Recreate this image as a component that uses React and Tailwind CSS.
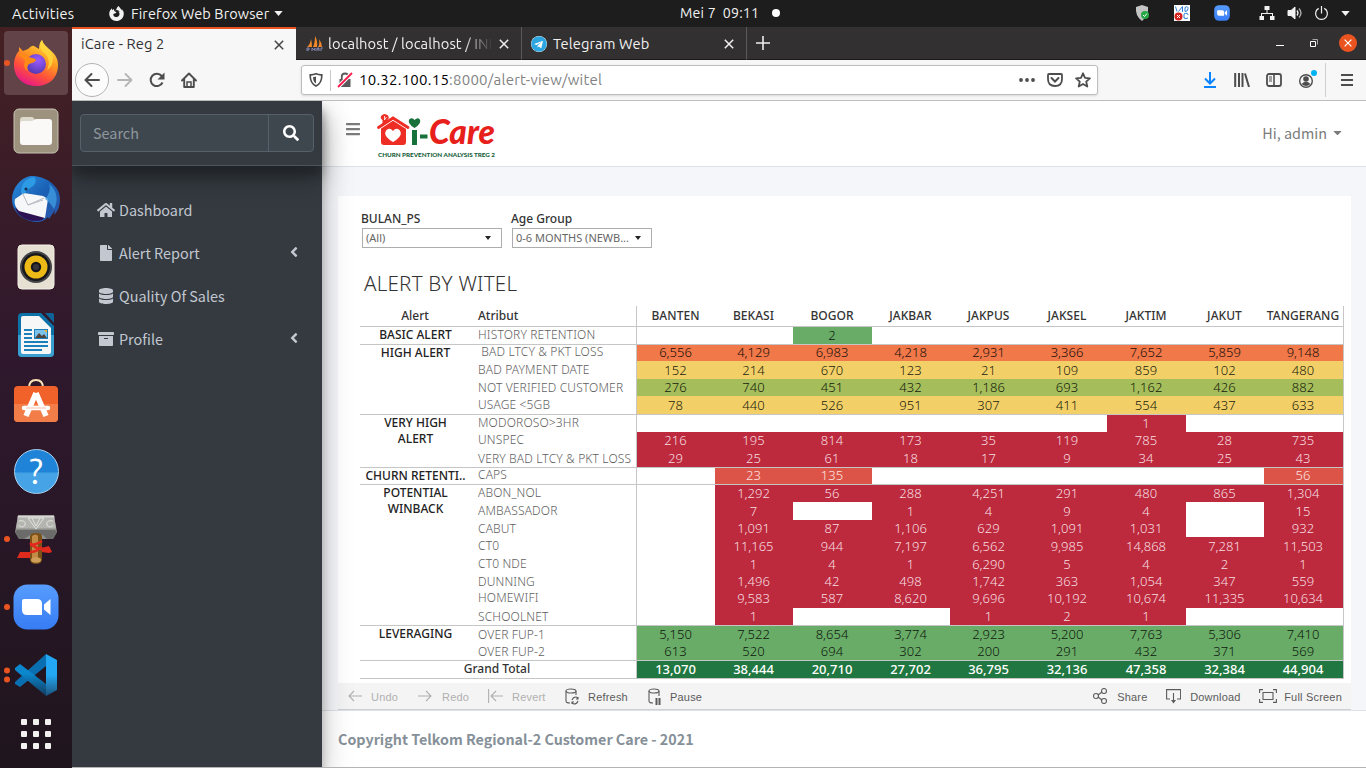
import React from 'react';
import { FaHome, FaFile, FaDatabase, FaArchive, FaAngleLeft, FaBars, FaSearch, FaCaretDown, FaTelegram } from 'react-icons/fa';
import { SiFirefoxbrowser } from 'react-icons/si';

const UI = "font-['Ubuntu','Noto_Sans',sans-serif]";
const SITE = "font-['Source_Sans_Pro','Noto_Sans_CJK_SC',sans-serif]";

const R = 'bg-[#bd2a3d] text-[#f7dfe1]';
const O = 'bg-[#f07849] text-[#20100a]';
const Y = 'bg-[#f3d067] text-[#201c0e]';
const G = 'bg-[#a5be5b] text-[#161a0c]';
const F = 'bg-[#69ac67] text-[#0e170e]';
const C = 'bg-[#dc5447] text-[#fbe5e2]';
const D = 'bg-[#217741] text-white font-medium!';
const COLS = ['BANTEN', 'BEKASI', 'BOGOR', 'JAKBAR', 'JAKPUS', 'JAKSEL', 'JAKTIM', 'JAKUT', 'TANGERANG'];
const GRID = 'grid grid-cols-[78px_78px_79px_78px_78px_79px_79px_78px_79px]';

/* row: name, height, cell tone, values, text raised by a pixel */
const GROUPS = [
  { label: ['BASIC ALERT'], rows: [['HISTORY RETENTION', 'h-[17px]', F, '||2||||||', true]] },
  {
    label: ['HIGH ALERT'],
    rows: [
      ['\u00a0BAD LTCY & PKT LOSS', 'h-[16px]', O, '6,556|4,129|6,983|4,218|2,931|3,366|7,652|5,859|9,148', true],
      ['BAD PAYMENT DATE', 'h-[18px]', Y, '152|214|670|123|21|109|859|102|480'],
      ['NOT VERIFIED CUSTOMER', 'h-[17px]', G, '276|740|451|432|1,186|693|1,162|426|882'],
      ['USAGE <5GB', 'h-[18px]', Y, '78|440|526|951|307|411|554|437|633'],
    ],
  },
  {
    label: ['VERY HIGH', 'ALERT'],
    rows: [
      ['MODOROSO>3HR', 'h-[17px]', R, '||||||1||', true],
      ['UNSPEC', 'h-[18px]', R, '216|195|814|173|35|119|785|28|735', true],
      ['VERY BAD LTCY & PKT LOSS', 'h-[17px]', R, '29|25|61|18|17|9|34|25|43'],
    ],
  },
  { label: ['CHURN RETENTI..'], rows: [['CAPS', 'h-[16px]', C, '|23|135||||||56', true]] },
  {
    label: ['POTENTIAL', 'WINBACK'],
    rows: [
      ['ABON_NOL', 'h-[17px]', R, '|1,292|56|288|4,251|291|480|865|1,304', true],
      ['AMBASSADOR', 'h-[18px]', R, '|7||1|4|9|4||15'],
      ['CABUT', 'h-[17px]', R, '|1,091|87|1,106|629|1,091|1,031||932'],
      ['CT0', 'h-[18px]', R, '|11,165|944|7,197|6,562|9,985|14,868|7,281|11,503'],
      ['CT0 NDE', 'h-[18px]', R, '|1|4|1|6,290|5|4|2|1'],
      ['DUNNING', 'h-[17px]', R, '|1,496|42|498|1,742|363|1,054|347|559'],
      ['HOMEWIFI', 'h-[18px]', R, '|9,583|587|8,620|9,696|10,192|10,674|11,335|10,634', true],
      ['SCHOOLNET', 'h-[17px]', R, '|1|||1|2|1||'],
    ],
  },
  {
    label: ['LEVERAGING'],
    rows: [
      ['OVER FUP-1', 'h-[17px]', F, '5,150|7,522|8,654|3,774|2,923|5,200|7,763|5,306|7,410'],
      ['OVER FUP-2', 'h-[17px]', F, '613|520|694|302|200|291|432|371|569'],
    ],
  },
];

function Cells({ values, tone, height, raised }) {
  return (
    <div className={`${GRID} ${height} border-x border-[#c6c6c6]`}>
      {values.split('|').map((v, i) => (
        <div key={i} className={`flex items-center justify-center pr-[1px] text-[13px] leading-none font-light ${raised ? 'pb-px' : ''} ${v ? tone : ''}`}>{v}</div>
      ))}
    </div>
  );
}

function AlertTable() {
  return (
    <div className="w-[984px] font-['Noto_Sans',sans-serif] text-[12.5px] text-[#333]">
      <div className="flex h-[21px] border-b border-[#c6c6c6] text-[12px] font-medium">
        <div className="flex w-[110px] items-center justify-center">Alert</div>
        <div className="flex w-[166px] items-center pl-[8px]">Atribut</div>
        <div className={`${GRID} border-x border-[#c6c6c6]`}>
          {COLS.map((c) => (
            <div key={c} className="flex items-center justify-center pr-px tracking-[0.05px]">{c}</div>
          ))}
        </div>
      </div>
      {GROUPS.map((g) => (
        <div key={g.label[0]} className="flex border-b border-[#c6c6c6]">
          <div className="w-[111px] text-center text-[12px] leading-[16px] font-medium whitespace-nowrap text-[#222]">
            {g.label.map((l) => (
              <div key={l}>{l}</div>
            ))}
          </div>
          <div>
            {g.rows.map(([name, height, tone, values, raised]) => (
              <div key={name} className="flex">
                <div className={`flex w-[165px] items-center pl-[7px] text-[12px] leading-none font-light tracking-[0.15px] whitespace-nowrap text-[#5e5e5e] ${raised ? 'pb-[2px]' : ''} ${height}`}>{name}</div>
                <Cells values={values} tone={tone} height={height} raised={raised} />
              </div>
            ))}
          </div>
        </div>
      ))}
      <div className="flex border-b border-[#c6c6c6]">
        <div className="flex w-[276px] items-center justify-center pr-[2px] pb-[2px] text-[12px] leading-none font-medium">Grand Total</div>
        <Cells values="13,070|38,444|20,710|27,702|36,795|32,136|47,358|32,384|44,904" tone={D} height="h-[17px]" />
      </div>
    </div>
  );
}

/* ---------- dock icons ---------- */
const FirefoxIcon = () => (
  <svg viewBox="0 0 48 48" className="size-12">
    <defs>
      <linearGradient id="ffa" x1=".8" y1="0" x2=".3" y2="1">
        <stop offset="0" stopColor="#fff04a" />
        <stop offset=".4" stopColor="#ff9a20" />
        <stop offset=".7" stopColor="#ff4f3c" />
        <stop offset="1" stopColor="#e5168c" />
      </linearGradient>
      <radialGradient id="ffb" cx=".6" cy=".3" r=".8">
        <stop offset="0" stopColor="#9d5bff" />
        <stop offset="1" stopColor="#4b35a8" />
      </radialGradient>
    </defs>
    <path d="M30 1c1 4 4 6 8 10 6 5 8 9 8 15 0 13-9 21-22 21S2 38 2 26C2 20 4 15 7 12V8l4 4 5-2c2-1 3-4 6-3l5 3c0-4 1-7 3-9z" fill="url(#ffa)" />
    <circle cx="24" cy="25" r="10" fill="url(#ffb)" />
    <path d="M6 16c4-2 7-1 10 2 4 1 7 1 8 3-1 3-5 3-7 4-2 2-2 4-1 7-5-2-4-7-3-10-1-3-4-4-7-6z" fill="#ff8a16" />
    <path d="M30 12c6 4 9 11 5 19 8-5 7-15 3-20-4-3-7-6-8-10-3 4-2 7 0 11z" fill="#ffd83d" opacity=".8" />
  </svg>
);
const FilesIcon = () => (
  <svg viewBox="0 0 46 46" className="size-[46px]">
    <rect x="1" y="1" width="44" height="44" rx="5" fill="#9c927e" stroke="#c9c2b4" />
    <path d="M7 12q0-3 3-3h9q2 0 3 3h14q3 0 3 3v4H7z" fill="#ded9cd" />
    <path d="M7 16q0-3 3-3h9l4-2h13q3 0 3 3v20q0 3-3 3H10q-3 0-3-3z" fill="#faf9f7" />
  </svg>
);
const ThunderbirdIcon = () => (
  <svg viewBox="0 0 48 48" className="size-12">
    <defs>
      <linearGradient id="tb" x1="0" y1="0" x2="1" y2="1">
        <stop offset="0" stopColor="#2b8fe0" />
        <stop offset=".5" stopColor="#1a60b5" />
        <stop offset="1" stopColor="#2a55a8" />
      </linearGradient>
    </defs>
    <path d="M18 1c14-1 30 9 30 23 0 7-2 12-6 16l1-5-6 9-1-2c-4 4-7 5-12 5C12 46 0 38 0 24 0 14 8 3 18 1z" fill="url(#tb)" />
    <path d="M3 33l8 3 22 6-3 3C18 48 7 43 3 33z" fill="#2c1153" />
    <path d="M3 24l9-6 19 3 5 3-3 19-26-7c-4-4-5-8-4-12z" fill="#f6f7f9" />
    <path d="M10 17l6 13 16-7M16 30l15-5" fill="none" stroke="#b7bac2" strokeWidth="1" />
    <path d="M9 17C9 8 15 3 22 2c3 3 2 6-1 9l-6 4-3 4z" fill="#2c9ae4" />
    <circle cx="14" cy="14" r="1.5" fill="#132c4f" />
    <path d="M33 24c4-4 6-10 4-15 8 6 10 16 5 25-2-3-4-7-9-10z" fill="#3f9be0" opacity=".8" />
  </svg>
);
const RhythmboxIcon = () => (
  <svg viewBox="0 0 38 46" className="h-[46px] w-[38px]">
    <rect x="1" y="1" width="36" height="44" rx="4" fill="#e6e0d3" stroke="#f4f0e6" />
    <circle cx="19" cy="23" r="16" fill="#45454a" />
    <circle cx="19" cy="23" r="14" fill="#17171c" />
    <circle cx="19" cy="23" r="11.5" fill="#edb917" />
    <circle cx="19" cy="23" r="5.2" fill="#16161a" />
    <circle cx="19" cy="23" r="3" fill="#34343a" />
  </svg>
);
const WriterIcon = () => (
  <svg viewBox="0 0 38 46" className="h-[46px] w-[38px]">
    <path d="M5 1h19l13 13v27q0 4-4 4H5q-4 0-4-4V5q0-4 4-4z" fill="#0d72a8" />
    <path d="M1 23h36v18q0 4-4 4H5q-4 0-4-4z" fill="#3a9ed0" />
    <path d="M28 1h7q2 0 2 2v8z" fill="#0e6498" />
    <path d="M6 4h16l12 12v24q0 2-2 2H6q-2 0-2-2V6q0-2 2-2z" fill="#f7f7f7" />
    <path d="M7 18h8M7 22h8M7 26h8M7 30h24M7 34h24M7 38h18" stroke="#1c81ba" strokeWidth="2" />
    <rect x="17" y="17" width="14" height="10" fill="#1c81ba" />
    <rect x="18" y="18" width="12" height="8" fill="#7dc2ea" />
    <path d="M18 26l4-5 3 3 2-2 3 4z" fill="#4f4540" />
    <path d="M27 18h3v3z" fill="#f5b32d" />
  </svg>
);
const SoftwareIcon = () => (
  <svg viewBox="0 0 46 46" className="mb-1 size-[46px]">
    <path d="M16 10q0-8 7-8t7 8" fill="none" stroke="#fae2b4" strokeWidth="2" />
    <rect x="1" y="8" width="44" height="36" rx="4" fill="#f1622b" />
    <path d="M1 26h44v14q0 4-4 4H5q-4 0-4-4z" fill="#f37d48" />
    <path d="M23 15L13 38M23 15l10 23" stroke="#fff" strokeWidth="5.5" />
    <path d="M11 30h24" stroke="#fff" strokeWidth="4.5" strokeLinecap="round" />
    <path d="M13 30h20" stroke="#f6b398" strokeWidth=".8" />
  </svg>
);
const HelpIcon = () => (
  <span className={`relative flex size-[45px] items-center justify-center rounded-full border border-[#a8d3f3] bg-linear-to-b from-[#1f84d8] from-50% to-[#45a3e6] to-55% text-[35px] leading-none text-white ${UI}`}>?</span>
);
const HammerIcon = () => (
  <svg viewBox="0 0 44 50" className="h-[50px] w-11">
    <path d="M4 2h36l3 16-4 7H5l-4-7z" fill="#8f8f8c" />
    <path d="M4 1.500h36l2 13H2z" fill="#b4b4b0" />
    <path d="M4 1.500h36l.5 2h-37z" fill="#d6d6d2" />
    <path d="M1 18l2-2h38l2 2-4 7h-6l-4-4H16l-6 4H5z" fill="#6b6b69" />
    <path d="M5 7c5-1 7 1 6 4s-6 2-6 0M39 7c-5-1-7 1-6 4s6 2 6 0M14 4h16l-8 11zM18 4l4 8 4-8" fill="none" stroke="#e6e6e3" strokeWidth=".9" />
    <path d="M3 44l3-6h11l-1 6zM27 34l8-2 1 2 2 4-3 1-8-1z" fill="#df2a1e" />
    <path d="M16 23q0-4 6-4t6 4v23q-1 4-6 4t-6-4z" fill="#7b5117" />
    <path d="M18 22q4-3 6 0v22h-6z" fill="#c08c45" />
    <path d="M16 31q6 0 12-4M16 29q6 6 12 6M16 38q6 0 12-5" fill="none" stroke="#e0281c" strokeWidth="2.500" />
    <ellipse cx="22" cy="46" rx="5" ry="2.800" fill="#cf9f59" />
  </svg>
);
const ZoomIcon = ({ className }) => (
  <svg viewBox="0 0 46 46" className={className}>
    <defs>
      <linearGradient id="zm" x1="0" y1="0" x2="0" y2="1">
        <stop offset="0" stopColor="#579dfd" />
        <stop offset="1" stopColor="#377cf4" />
      </linearGradient>
    </defs>
    <rect x=".5" y=".5" width="45" height="45" rx="14" fill="url(#zm)" />
    <path d="M9 17q0-2 2-2h13q5 0 5 5v11H14q-5 0-5-5zM37.500 15v16l-6.500-5.500v-5z" fill="#fff" />
  </svg>
);
const CodeIcon = () => (
  <svg viewBox="0 0 44 44" className="size-11">
    <defs>
      <linearGradient id="vsa" x1="0" y1="0" x2="0" y2="1">
        <stop offset=".5" stopColor="#23a7f2" />
        <stop offset="1" stopColor="#1c527c" />
      </linearGradient>
      <linearGradient id="vsb" x1="0" y1="0" x2="0" y2="1">
        <stop offset=".3" stopColor="#0b87ce" />
        <stop offset="1" stopColor="#123a5c" />
      </linearGradient>
    </defs>
    <path d="M1 29L32 1v12L6 34l-5-3z" fill="#0a6fb0" />
    <path d="M1 15l5-4 26 20v12L1 17z" fill="url(#vsb)" />
    <path d="M32 1l11 6v30l-11 6z" fill="url(#vsa)" />
  </svg>
);

function DockItem({ children, dots = 0, active }) {
  return (
    <div className={`relative mx-1 flex h-16 shrink-0 items-center justify-center rounded ${active ? 'bg-[#624448]' : ''}`}>
      {dots > 0 && (
        <span className="absolute top-1/2 left-0 flex -translate-y-1/2 flex-col gap-[3px]">
          {Array.from({ length: dots }, (_, i) => (
            <i key={i} className="block size-[6px] rounded-full bg-[#e95420]" />
          ))}
        </span>
      )}
      {children}
    </div>
  );
}

function Dock() {
  return (
    <nav className="flex w-[72px] shrink-0 flex-col gap-1 overflow-hidden bg-linear-to-b from-[#452023] via-[#2f182d] via-45% to-[#1f151d] pt-1">
      <DockItem active dots={1}><FirefoxIcon /></DockItem>
      <DockItem><FilesIcon /></DockItem>
      <DockItem><ThunderbirdIcon /></DockItem>
      <DockItem><RhythmboxIcon /></DockItem>
      <DockItem><WriterIcon /></DockItem>
      <DockItem><SoftwareIcon /></DockItem>
      <DockItem><HelpIcon /></DockItem>
      <DockItem dots={1}><HammerIcon /></DockItem>
      <DockItem dots={1}><ZoomIcon className="size-[46px]" /></DockItem>
      <DockItem dots={2}><CodeIcon /></DockItem>
      <div className="ml-[21px] grid w-[30px] grid-cols-3 gap-[6px] pt-[8px]">
        {Array.from({ length: 9 }, (_, i) => (
          <i key={i} className="size-[6px] rounded-[1px] bg-[#f2f1f0]" />
        ))}
      </div>
    </nav>
  );
}

function TopBar() {
  return (
    <header className={`grid h-[27px] shrink-0 grid-cols-[680px_1fr] items-center bg-[#1d1d1d] text-[14.500px] text-[#f2f2f2] ${UI}`}>
      <div className="flex items-center">
        <span className="ml-3 w-[63px] tracking-[0.3px]">Activities</span>
        <SiFirefoxbrowser className="ml-[34px] size-[15px]" />
        <span className="ml-[7px] w-[138px] tracking-[0.1px] whitespace-nowrap">Firefox Web Browser</span>
        <svg viewBox="0 0 10 6" className="ml-[5px] h-[5px] w-[9px]"><path d="M0 0h10L5 6z" fill="currentColor" /></svg>
      </div>
      <div className="flex items-center">
        <span className="w-[79px] text-[14.200px] tracking-[0.2px] whitespace-pre">Mei 7  09:11</span>
        <i className="ml-[13px] size-2 rounded-full bg-white" />
        <span className="flex-1" />
        <svg viewBox="0 0 16 16" className="size-4">
          <path d="M1 2l6-2 6 2q1 8-6 14-7-5-6-14z" fill="#c4c4c4" />
          <circle cx="10" cy="10" r="4" fill="#26a845" />
          <path d="M8 10l1.500 1.500 2.500-3" fill="none" stroke="#fff" />
        </svg>
        <svg viewBox="0 0 16 16" className="ml-[23px] size-4">
          <path d="M0 0h16v16H0z" fill="#fff" />
          <path d="M1.500 1.500l1.500 5M4.500 6.500l4-5v5.500M11 2.500q3-2 3 1t-3 3V2.500M10 9q4-2 4 1M10 9v4q2 1 4 0" fill="none" stroke="#2d7fd6" />
          <circle cx="4.500" cy="11.500" r="4" fill="#d4211d" />
          <path d="M3 10l3 3m0-3l-3 3" stroke="#fff" />
        </svg>
        <ZoomIcon className="ml-6 size-4" />
        <svg viewBox="0 0 16 14" className="ml-[29px] h-[14px] w-4" fill="#f2f2f2">
          <path d="M5.500 0h5v4H8.500v3H14v3h1.500v4h-4.500v-4h2V8H3v2h2v4H.5v-4H2V7h5.500V4h-2z" />
        </svg>
        <svg viewBox="0 0 16 16" className="ml-3 size-4" fill="none" stroke="#f2f2f2">
          <path d="M1 5.500h3l4-3.500v12L4 10.500H1z" fill="#f2f2f2" />
          <path d="M10 5.500q2 2.500 0 5" strokeWidth="1.300" />
          <path d="M12 3.500q4 4.500 0 9" strokeWidth="1.300" opacity=".7" />
        </svg>
        <svg viewBox="0 0 16 16" className="ml-[11px] size-[15px]" fill="none" stroke="#f2f2f2" strokeWidth="1.300">
          <path d="M5 2.500a6.300 6.300 0 1 0 6 0M8 0v8" />
        </svg>
        <svg viewBox="0 0 10 6" className="mr-[16px] ml-[12px] h-[5px] w-[9px]"><path d="M0 0h10L5 6z" fill="#f2f2f2" /></svg>
      </div>
    </header>
  );
}

const Cross = ({ className }) => (
  <svg viewBox="0 0 10 10" className={className}><path d="M.8.8l8.400 8.400M9.200.8L.8 9.200" stroke="currentColor" strokeWidth="1.500" fill="none" /></svg>
);

function Tabs() {
  return (
    <div className={`flex h-[33px] shrink-0 bg-[#333031] text-[14.700px] text-[#f0f0f0] ${UI}`}>
      <div className="flex w-[224px] items-center border-t-2 border-[#e95420] bg-[#f7f7f7] pr-[12px] pl-[9px] text-[#333]">
        <span className="flex-1 tracking-[0.1px]">iCare - Reg 2</span>
        <Cross className="size-[10px] text-[#444]" />
      </div>
      <div className="flex w-[226px] items-center border-r border-b border-r-[#5c5a5a] border-b-[#1c1b1b] pt-[2px] pr-[12px] pl-[10px]">
        <svg viewBox="0 0 17 16" className="h-4 w-[17px]">
          <path d="M1 11Q4 9 5 3q1 4 1 8zM7 11Q9 7 9 0q3 5 2 11zM12 11q2-3 1-8 3 4 3 8z" fill="#f0872a" />
          <path d="M1 15v-3h2v2H1m5 1v-3l2 2 1-2v3m2 0v-3h2v3m-2-2h2m2 2v-3l2 0" fill="none" stroke="#8b8fc2" strokeWidth=".9" />
        </svg>
        <span className="ml-[5px] w-[166px] tracking-[0.1px] whitespace-nowrap [mask-image:linear-gradient(90deg,#000_82%,transparent_99%)]">localhost / localhost / INI</span>
        <Cross className="ml-[5px] size-[10px] shrink-0" />
      </div>
      <div className="flex w-[225px] items-center border-r border-b border-r-[#5c5a5a] border-b-[#1c1b1b] pt-[2px] pr-[12px] pl-[9px]">
        <FaTelegram className="size-4 rounded-full bg-white text-[#2ca5e0]" />
        <span className="ml-[6px] flex-1 tracking-[0.1px]">Telegram Web</span>
        <Cross className="size-[10px]" />
      </div>
      <div className="flex flex-1 items-center border-b border-[#1c1b1b] pr-[9px] pl-[9px]">
        <svg viewBox="0 0 14 14" className="size-[14px]"><path d="M7 0v14M0 7h14" stroke="#eee" strokeWidth="1.600" /></svg>
        <span className="flex-1" />
        <i className="mt-[5px] h-px w-2 bg-white" />
        <svg viewBox="0 0 8 8" className="ml-[26px] size-2"><path d="M.5 2.500h5v5h-5z" fill="none" stroke="#fff" /><path d="M2.500.5h5v5" fill="none" stroke="#aaa" /></svg>
        <span className="ml-[21px] flex size-[18px] items-center justify-center rounded-full bg-[#e95420] text-white"><Cross className="size-[8px]" /></span>
      </div>
    </div>
  );
}

function Toolbar() {
  return (
    <div className={`flex h-[41px] shrink-0 items-center border-b border-[#bdbdbd] bg-[#f7f7f7] pl-[3px] text-[#4d4d4d] ${UI}`}>
      <span className="flex size-[34px] items-center justify-center rounded-full border border-[#b3b3b3] bg-[#fcfcfc]">
        <svg viewBox="0 0 16 16" className="size-4"><path d="M15 8H2M7.500 2L1.500 8l6 6" fill="none" stroke="currentColor" strokeWidth="2" strokeLinecap="round" strokeLinejoin="round" /></svg>
      </span>
      <svg viewBox="0 0 16 16" className="ml-2 size-4 text-[#b5b5b5]"><path d="M1 8h13M8.500 2l6 6-6 6" fill="none" stroke="currentColor" strokeWidth="1.800" strokeLinecap="round" strokeLinejoin="round" /></svg>
      <svg viewBox="0 0 16 16" className="ml-4 size-4"><path d="M13.500 10.500A6.200 6.200 0 1 1 12.700 4L14 5.500" fill="none" stroke="currentColor" strokeWidth="2" /><path d="M15.500.5v7h-7z" fill="currentColor" /></svg>
      <svg viewBox="0 0 16 16" className="ml-4 size-4"><path d="M1 8.500L8 1.500l7 7M3.200 7.500V15h9.600V7.500" fill="none" stroke="currentColor" strokeWidth="1.900" strokeLinecap="round" strokeLinejoin="round" /><path d="M6 15v-5h4v5" fill="none" stroke="currentColor" strokeWidth="1.500" /></svg>
      <div className="ml-[104px] flex h-[30px] w-[797px] items-center rounded-[3px] border border-[#bdbdbd] bg-white pr-[6px] pl-[7px] shadow-sm">
        <svg viewBox="0 0 14 14" className="size-[14px]"><path d="M1.200 1.800Q4 2 7 .8q3 1.200 5.800 1 .3 8.500-5.800 11.300Q.9 10.300 1.200 1.800z" fill="none" stroke="currentColor" strokeWidth="1.600" /><path d="M7 3.500v7Q4 8.500 4 4.200z" fill="currentColor" /></svg>
        <i className="ml-[7px] h-[21px] w-px bg-[#c8c8c8]" />
        <svg viewBox="0 0 16 16" className="ml-[6px] size-4"><path d="M2.500 7h11v8h-11z" fill="#5a5a5a" /><path d="M4.800 7.500V4.500q0-3 3.200-3t3.200 3v3" fill="none" stroke="#5a5a5a" strokeWidth="1.800" /><path d="M1 15L15 1" stroke="#fff" strokeWidth="4" /><path d="M1 15L15 1" stroke="#ff1a4b" strokeWidth="1.800" /></svg>
        <span className="ml-[6px] flex-1 pt-px text-[15px] tracking-[0.240px] text-[#828282]"><span className="text-black">10.32.100.15</span>:8000/alert-view/witel</span>
        <svg viewBox="0 0 16 4" className="h-1 w-4" fill="currentColor"><circle cx="2" cy="2" r="1.900" /><circle cx="8" cy="2" r="1.900" /><circle cx="14" cy="2" r="1.900" /></svg>
        <svg viewBox="0 0 16 14" className="ml-[12px] h-[14px] w-4"><path d="M2 1h12q1 0 1 1v4q0 7-7 7T1 6V2q0-1 1-1z" fill="none" stroke="currentColor" strokeWidth="1.800" /><path d="M4.500 5L8 8.500 11.500 5" fill="none" stroke="currentColor" strokeWidth="2" strokeLinecap="round" /></svg>
        <svg viewBox="0 0 16 16" className="ml-[12px] size-4"><path d="M8 1.300l2 4.500 4.900.5-3.700 3.300 1.100 4.900L8 12l-4.300 2.500 1.100-4.900L1.100 6.300 6 5.800z" fill="none" stroke="currentColor" strokeWidth="1.800" strokeLinejoin="round" /></svg>
      </div>
      <svg viewBox="0 0 14 16" className="ml-[105px] h-4 w-[14px]"><path d="M7 0v11M2 6.500l5 5 5-5M1 15h12" fill="none" stroke="#0a84ff" strokeWidth="2" /></svg>
      <svg viewBox="0 0 16 14" className="ml-[17px] h-[14px] w-4"><path d="M1.200 0v14M5 0v14M8.500 0v14M11 .5L15 14" fill="none" stroke="currentColor" strokeWidth="2" /></svg>
      <svg viewBox="0 0 16 14" className="ml-4 h-[14px] w-4"><rect x="1" y="1" width="14" height="12" rx="2" fill="none" stroke="currentColor" strokeWidth="1.800" /><path d="M8 1v12" stroke="currentColor" strokeWidth="1.600" /><path d="M3 4h3M3 6h3M3 8h3" stroke="currentColor" /></svg>
      <svg viewBox="0 0 20 18" className="mb-[2px] ml-4 h-[18px] w-5"><circle cx="8" cy="11" r="6.300" fill="none" stroke="currentColor" strokeWidth="1.400" /><circle cx="8" cy="9" r="2.800" fill="currentColor" /><path d="M3.500 14q4.500-4.500 9 0-4.500 4-9 0z" fill="currentColor" /><circle cx="16" cy="3" r="3" fill="#00b3f4" /></svg>
      <i className="ml-[7px] h-[34px] w-px bg-[#cfcfcf]" />
      <svg viewBox="0 0 12 12" className="ml-[15px] size-3"><path d="M0 1h12M0 6h12M0 11h12" stroke="currentColor" strokeWidth="2" /></svg>
    </div>
  );
}

const ELEV = 'shadow-[0_14px_28px_rgba(0,0,0,0.25),0_10px_10px_rgba(0,0,0,0.22)]';

function NavItem({ icon: Icon, label, more, big }) {
  return (
    <div className="flex h-[43px] items-center pr-[20px] pl-[25px]">
      <span className="flex w-[18px] justify-center"><Icon className={big ? 'size-[18px]' : 'size-4'} /></span>
      <span className="ml-1 flex-1">{label}</span>
      {more && <FaAngleLeft className="mb-px size-4" />}
    </div>
  );
}

function Sidebar() {
  return (
    <aside className={`relative z-10 w-[250px] shrink-0 bg-[#343a40] text-[14.400px] text-[#c2c7d0] ${SITE} ${ELEV}`}>
      <div className={`h-[65px] border-b border-[#4b545c] bg-[#343a40] px-2 pt-[13px] ${ELEV}`}>
        <div className="flex h-[38px] rounded-[4px] border border-[#56606a] bg-[#3f474e]">
          <span className="flex flex-1 items-center pl-3 text-[#8f979e]">Search</span>
          <span className="flex w-[45px] items-center justify-center border-l border-[#56606a] text-white"><FaSearch className="size-4" /></span>
        </div>
      </div>
      <div className="pt-[22px]">
        <NavItem icon={FaHome} label="Dashboard" big />
        <NavItem icon={FaFile} label="Alert Report" more />
        <NavItem icon={FaDatabase} label="Quality Of Sales" />
        <NavItem icon={FaArchive} label="Profile" more />
      </div>
    </aside>
  );
}

const Logo = () => (
  <svg viewBox="0 0 120 46" className="h-[46px] w-[120px] overflow-visible">
    <path d="M4 13L16 6l13 7v16q0 3-3 3H7q-3 0-3-3z" fill="#ee2d24" />
    <path d="M1.500 16.500L16 7l15 9.500" fill="none" stroke="#fff" strokeWidth="1.200" />
    <path d="M1.500 14.500L16 5l15 9.500" fill="none" stroke="#ee2d24" strokeWidth="2.800" strokeLinecap="round" />
    <path d="M5.500 11V7Q2.500 5 4.500 2.500q3-3 6.500 0 2 3-1 4.500v2" fill="#ee2d24" />
    <path d="M7.500 3v4l2-3" fill="none" stroke="#fff" strokeWidth=".8" />
    <path d="M16 29q-11-6.500-6.500-12 3.500-3 6.500 1 3-4 6.500-1 4.500 5.500-6.500 12z" fill="#fff" />
    <path d="M37.500 15q-8-5-5-9 3-2 5 1 3-3 5-1 3 4-5 9z" fill="#16713b" />
    <path d="M35 17h5v15h-5zM43 21.500h7.500v4H43z" fill="#16713b" />
    <text x="52" y="31" fill="#e8201c" fontFamily="Lato" fontWeight="900" fontStyle="italic" fontSize="34" textLength="66" lengthAdjust="spacingAndGlyphs">Care</text>
    <text x="1" y="43.500" fill="#16603a" fontFamily="Lato" fontWeight="900" fontSize="5.800" textLength="117" lengthAdjust="spacingAndGlyphs">CHURN PREVENTION ANALYSIS TREG 2</text>
  </svg>
);

function Select({ label, value, className }) {
  return (
    <div className={className}>
      <div className="h-[16px] font-['Noto_Sans',sans-serif] text-[12px] leading-[16px] font-medium text-[#333]">{label}</div>
      <div className="mt-[1px] ml-px flex h-5 w-[140px] items-center border border-[#adadad] pr-[10px] pl-[3px] font-['Noto_Sans',sans-serif] text-[11px] text-[#666]">
        <span className="flex-1 pt-px whitespace-nowrap">{value}</span>
        <svg viewBox="0 0 6 4" className="h-1 w-[6px]"><path d="M0 0h6L3 4z" fill="#222" /></svg>
      </div>
    </div>
  );
}

function Viz() {
  const ic = { fill: 'none', stroke: 'currentColor', strokeWidth: 1.1 };
  return (
    <>
      <div className="h-[487px] bg-white pt-[15px] pl-[22px]">
        <div className="flex">
          <Select label="BULAN_PS" value="(All)" className="w-[150px] pl-px" />
          <Select label="Age Group" value="0-6 MONTHS (NEWB..." className="pl-px" />
        </div>
        <h1 className="mt-[20px] h-[30px] pl-[4px] font-['Noto_Sans',sans-serif] text-[20.500px] leading-[30px] font-light tracking-[0.25px] text-[#333]">ALERT BY WITEL</h1>
        <div className="pt-[8px]"><AlertTable /></div>
      </div>
      <div className="flex h-[27px] items-center border-b border-[#cfcfd6] bg-[#f4f4f4] pr-[9px] pl-[10px] font-['Liberation_Sans',Arial,sans-serif] text-[11px] tracking-[0.2px] text-[#5b5b5b] [&_span]:pt-[2px]">
        <div className="flex w-[70px] items-center text-[#b0b0b0]"><svg viewBox="0 0 14 12" className="h-3 w-[14px]" {...ic}><path d="M14 6H1M6 1L1 6l5 5" /></svg><span className="ml-[9px]">Undo</span></div>
        <div className="flex w-[70px] items-center text-[#b0b0b0]"><svg viewBox="0 0 14 12" className="h-3 w-[14px]" {...ic}><path d="M0 6h13M8 1l5 5-5 5" /></svg><span className="ml-[10px]">Redo</span></div>
        <div className="flex w-[77px] items-center text-[#b0b0b0]"><svg viewBox="0 0 15 14" className="h-[14px] w-[15px]" {...ic}><path d="M.6 0v14M15 7H3M8 2L3 7l5 5" /></svg><span className="ml-[9px]">Revert</span></div>
        <div className="flex w-[83px] items-center"><svg viewBox="0 0 14 17" className="h-[17px] w-[14px]" {...ic}><ellipse cx="6" cy="3" rx="5" ry="2" /><path d="M1 3v10q0 2 4 2M11 3v4M7 12q1-3 4-3 1.500 0 2 2m0-2v2h-2M13 13q-1 3-4 3-1.500 0-2-2m0 2v-2h2" /></svg><span className="ml-[9px]">Refresh</span></div>
        <div className="flex flex-1 items-center"><svg viewBox="0 0 14 17" className="h-[17px] w-[14px]" {...ic}><ellipse cx="6" cy="3" rx="5" ry="2" /><path d="M1 3v10q0 2 4 2M11 3v5" /><path d="M8.500 10v7M11.500 10v7" strokeWidth="2" /></svg><span className="ml-[8px]">Pause</span></div>
        <div className="flex w-[73px] items-center"><svg viewBox="0 0 15 16" className="h-4 w-[15px]" {...ic}><circle cx="3" cy="8" r="2.500" /><circle cx="11" cy="3" r="2.500" /><circle cx="11" cy="13" r="2.500" /><path d="M5 7l4-3M5 9l4 3" /></svg><span className="ml-[9px]">Share</span></div>
        <div className="flex w-[93px] items-center"><svg viewBox="0 0 15 15" className="h-[15px] w-[15px]" {...ic}><path d="M4 10H.6V.6h14V10H11M7.500 4v8" /><path d="M5 11h5l-2.500 3.500z" fill="currentColor" stroke="none" /></svg><span className="ml-[9px]">Download</span></div>
        <div className="flex items-center"><svg viewBox="0 0 18 14" className="h-[14px] w-[18px]" {...ic}><path d="M4 .6H.6V4M14 .6h3.400V4M4 13.400H.6V10M14 13.400h3.400V10M4 3.500h10v7H4z" /></svg><span className="ml-[7px] whitespace-nowrap">Full Screen</span></div>
      </div>
    </>
  );
}

export default function App() {
  return (
    <div className="flex h-[768px] w-[1366px] flex-col overflow-hidden bg-[#1d1d1d]">
      <TopBar />
      <div className="flex min-h-0 flex-1">
        <Dock />
        <div className="flex min-w-0 flex-1 flex-col">
          <Tabs />
          <Toolbar />
          <div className="flex min-h-0 flex-1 overflow-hidden border-b border-[#b4b4b4] bg-[#f4f6f9]">
            <Sidebar />
            <main className={`flex min-w-0 flex-1 flex-col ${SITE}`}>
              <div className="flex h-[66px] shrink-0 items-center border-b border-[#dee2e6] bg-white pl-[23px] text-[#7b7b7b]">
                <FaBars className="mb-[9px] size-4" />
                <span className="ml-[16px] pt-[5px]"><Logo /></span>
                <span className="flex-1" />
                <span className="pb-[2px] text-[14.400px]">Hi, admin</span>
                <FaCaretDown className="mr-[22px] mb-[2px] ml-[4px] size-[13px]" />
              </div>
              <div className="pt-[29px] pr-[15px] pl-4"><Viz /></div>
              <footer className="flex-1 border-t border-[#dee2e6] bg-white pt-[17px] pl-4 text-[14.300px] leading-[22px] font-bold text-[#869099]">Copyright Telkom Regional-2 Customer Care - 2021</footer>
            </main>
          </div>
        </div>
      </div>
    </div>
  );
}
